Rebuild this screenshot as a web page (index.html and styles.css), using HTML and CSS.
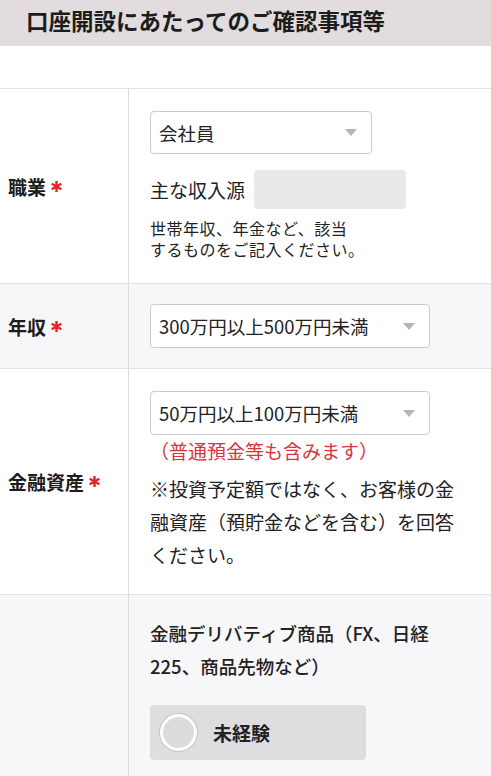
FILE: index.html
```html
<!DOCTYPE html>
<html lang="ja">
<head>
<meta charset="utf-8">
<link rel="stylesheet" href="styles.css">
</head>
<body>
<div class="header"><h1 class="title">口座開設にあたってのご確認事項等</h1></div>
<div class="spacer"></div>
<div class="form">
  <div class="row row-job">
    <div class="label">職業<svg class="req" viewBox="0 0 14 14"><path d="M7 1v12M1.8 4l10.4 6M1.8 10l10.4-6"/></svg></div>
    <div class="field">
      <div class="select w1"><span>会社員</span><i class="arrow"></i></div>
      <div class="income"><span class="income-label">主な収入源</span><div class="input"></div></div>
      <p class="note">世帯年収、年金など、該当<br>するものをご記入ください。</p>
    </div>
  </div>
  <div class="row alt row-income">
    <div class="label">年収<svg class="req" viewBox="0 0 14 14"><path d="M7 1v12M1.8 4l10.4 6M1.8 10l10.4-6"/></svg></div>
    <div class="field">
      <div class="select w2"><span>300万円以上500万円未満</span><i class="arrow"></i></div>
    </div>
  </div>
  <div class="row row-assets">
    <div class="label">金融資産<svg class="req" viewBox="0 0 14 14"><path d="M7 1v12M1.8 4l10.4 6M1.8 10l10.4-6"/></svg></div>
    <div class="field">
      <div class="select w2"><span>50万円以上100万円未満</span><i class="arrow"></i></div>
      <p class="red">（普通預金等も含みます）</p>
      <p class="desc">※投資予定額ではなく、お客様の金<br>融資産（預貯金などを含む）を回答<br>ください。</p>
    </div>
  </div>
  <div class="row alt row-exp">
    <div class="label"></div>
    <div class="field">
      <p class="q">金融デリバティブ商品（FX、日経<br>225、商品先物など）</p>
      <div class="radio"><span class="circle"></span><span class="radio-text">未経験</span></div>
    </div>
  </div>
</div>
</body>
</html>
```
FILE: styles.css
```css
* { box-sizing: border-box; }
body {
  margin: 0;
  font-family: "Noto Sans CJK JP", "Noto Sans", sans-serif;
  color: #222;
  background: #fff;
}
.header {
  height: 46px;
  background: #e2dcdf;
  display: flex;
  align-items: center;
  padding: 0 0 6px 26px;
}
.title {
  margin: 0;
  font-size: 22.5px;
  font-weight: 700;
  letter-spacing: 0;
  color: #1c1c1c;
}
.spacer { height: 42px; }
.form { border-top: 1px solid #e2e1e4; }
.row {
  display: grid;
  grid-template-columns: 129px 1fr;
  border-bottom: 1px solid #e2e1e4;
}
.row.alt { background: #f7f6f9; }
.label {
  border-right: 1px solid #dcdbde;
  display: flex;
  align-items: center;
  padding-left: 8px;
  font-size: 19px;
  font-weight: 700;
  color: #1c1c1c;
}
.req {
  width: 13px;
  height: 13px;
  margin-left: 4px;
  stroke: #e0262b;
  stroke-width: 2.6;
  fill: none;
}
.field { padding: 22px 0 23px 21px; }
.row-income .field { padding: 20px 0 20px 21px; }
.select {
  height: 44px;
  border: 1px solid #cbcacd;
  border-radius: 4px;
  background: #fff;
  display: flex;
  align-items: center;
  justify-content: space-between;
  padding: 0 14px 0 8px;
  font-size: 18.5px;
}
.w1 { width: 222px; height: 43px; }
.w2 { width: 280px; }
.arrow {
  width: 0;
  height: 0;
  border-left: 6px solid transparent;
  border-right: 6px solid transparent;
  border-top: 7px solid #b5b4b8;
}
.income {
  display: flex;
  align-items: center;
  margin-top: 16px;
  gap: 9px;
}
.income-label { font-size: 19px; }
.input {
  width: 152px;
  height: 39px;
  background: #e9e8eb;
  border-radius: 4px;
}
.note {
  margin: 9px 0 0;
  font-size: 16px;
  letter-spacing: 0.5px;
  line-height: 21px;
}
.red {
  margin: 0;
  color: #d8343c;
  font-size: 19px;
  line-height: 32px;
  font-weight: 400;
}
.desc {
  margin: 5px 0 0;
  font-size: 19px;
  line-height: 33px;
}
.q {
  margin: 0;
  font-size: 18.5px;
  line-height: 33px;
  font-weight: 500;
  color: #222;
}
.radio {
  margin-top: 22px;
  width: 216px;
  height: 55px;
  background: #dedde0;
  border-radius: 4px;
  display: flex;
  align-items: center;
  padding-left: 10px;
}
.circle {
  width: 37px;
  height: 37px;
  border-radius: 50%;
  background: #dcdbde;
  border: 3px solid #fff;
  box-shadow: 0 0 0 1px #c4c3c6;
}
.radio-text {
  margin-left: 16px;
  font-size: 19px;
  font-weight: 700;
}
```
